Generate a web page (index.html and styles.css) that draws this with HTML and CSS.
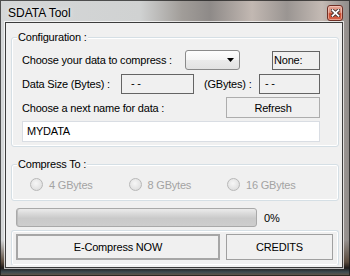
FILE: index.html
```html
<!DOCTYPE html>
<html lang="en">
<head>
    <meta charset="UTF-8">
    <title>SDATA Tool</title>
    <link rel="stylesheet" href="styles.css">
</head>
<body>
    <div class="window">
        <div class="titlebar">
            <span class="title">SDATA Tool</span>
            <span class="close">
                <svg width="9" height="8" viewBox="0 0 9 8">
                    <path d="M1.5 1.2 L7.5 6.8 M7.5 1.2 L1.5 6.8" stroke="#3a2a28" stroke-width="3.4" stroke-linecap="square"/>
                    <path d="M1.5 1.2 L7.5 6.8 M7.5 1.2 L1.5 6.8" stroke="#fff" stroke-width="1.8" stroke-linecap="square"/>
                </svg>
            </span>
        </div>
        <div class="client">
            <div class="group config">
                <span class="legend">Configuration :</span>
                <div class="row r1">
                    <span class="lbl w-choose">Choose your data to compress :</span>
                    <div class="combo">
                        <svg class="arrow" width="7" height="4" viewBox="0 0 7 4"><polygon points="0,0 7,0 3.5,4" fill="#000"/></svg>
                    </div>
                    <div class="box none">None:</div>
                </div>
                <div class="row r2">
                    <span class="lbl w-size">Data Size (Bytes) :</span>
                    <div class="box bytes">- -</div>
                    <span class="lbl w-gb">(GBytes) :</span>
                    <div class="box gbytes">- -</div>
                </div>
                <div class="row r3">
                    <span class="lbl">Choose a next name for data :</span>
                    <div class="btn refresh">Refresh</div>
                </div>
                <div class="row r4">
                    <div class="textbox">MYDATA</div>
                </div>
            </div>

            <div class="group compress">
                <span class="legend">Compress To :</span>
                <div class="radios">
                    <label class="radio"><span class="dot"></span>4 GBytes</label>
                    <label class="radio"><span class="dot"></span>8 GBytes</label>
                    <label class="radio"><span class="dot"></span>16 GBytes</label>
                </div>
            </div>

            <div class="progress-row">
                <div class="progress"></div>
                <span class="pct">0%</span>
            </div>

            <div class="group actions">
                <div class="btn big focus">E-Compress NOW</div>
                <div class="btn big credits">CREDITS</div>
            </div>
        </div>
    </div>
</body>
</html>
```

FILE: styles.css
```css
* {
    box-sizing: border-box;
}
body {
    margin: 0;
    font-family: "Liberation Sans", Arial, sans-serif;
    background: #2e2a26;
}
.window {
    width: 350px;
    height: 276px;
    padding: 0 7px 8px 5px;
    display: flex;
    flex-direction: column;
    background:
        linear-gradient(180deg, rgba(0,0,0,0) 0, rgba(0,0,0,0) 240px, #5a4a3c 262px, #1e1a18 268px, #3d4c52 272px, #6a5a48 276px),
        linear-gradient(90deg, #d5d7d8 0, #d0d2d2 40%, #a19d99 52%, #8e8a88 60%, #c2b8b2 72%, #9a9592 82%, #c4bab4 92%, #8f8b89 100%);
    box-shadow: inset 0 0 0 1px rgba(20, 20, 20, 0.7);
}
.titlebar {
    height: 22px;
    display: flex;
    justify-content: space-between;
    align-items: flex-start;
}
.title {
    padding: 6px 0 0 3px;
    font-size: 12px;
    line-height: 14px;
    color: #000;
    text-shadow: 0 0 5px rgba(255, 255, 255, 0.9);
}
.close {
    margin-top: 5px;
    width: 16px;
    height: 16px;
    border: 1px solid #6e2e24;
    border-radius: 3px;
    background: linear-gradient(#e7a595 0, #d88a76 45%, #c6462c 55%, #d8674c 100%);
    box-shadow: inset 0 0 0 1px rgba(255, 220, 210, 0.5);
    display: flex;
    align-items: center;
    justify-content: center;
}
.client {
    height: 246px;
    border: 1px solid #3c3c3c;
    background: #f0f0f0;
    box-shadow: 0 0 0 1px rgba(255, 255, 255, 0.7);
    font-size: 11px;
    letter-spacing: -0.2px;
    color: #000;
}
.group {
    position: relative;
    margin: 0 3px 0 5px;
    border: 1px solid #d5dfe5;
    border-radius: 3px;
    box-shadow: inset 0 0 0 1px #fff;
}
.legend {
    position: absolute;
    top: -7px;
    left: 5px;
    padding: 0 1px;
    line-height: 13px;
    background: #f0f0f0;
}
.config {
    margin-top: 14px;
    padding: 12px 18px 4px 10px;
}
.row {
    display: flex;
    align-items: center;
    height: 20px;
}
.r2 {
    margin-top: 4px;
}
.r3, .r4 {
    margin-top: 3px;
    height: 21px;
}
.lbl {
    white-space: nowrap;
}
.w-choose {
    width: 163px;
}
.w-size {
    width: 99px;
}
.w-gb {
    width: 55px;
    margin-left: 10px;
}
.combo {
    width: 55px;
    height: 20px;
    border: 1px solid #8a8a8a;
    border-radius: 3px;
    background: linear-gradient(#fdfdfd 0, #f4f4f4 50%, #ebebeb 50%, #e2e2e2 100%);
    display: flex;
    align-items: center;
    justify-content: flex-end;
    padding-right: 5px;
}
.box {
    height: 20px;
    border: 1px solid #646464;
    background: #f0f0f0;
    line-height: 17px;
    white-space: nowrap;
}
.none {
    width: 48px;
    height: 19px;
    margin-left: 32px;
    margin-top: 1px;
    padding-left: 1px;
}
.bytes {
    width: 73px;
    padding-left: 9px;
}
.gbytes {
    width: 61px;
    padding-left: 5px;
}
.btn {
    display: flex;
    align-items: center;
    justify-content: center;
    background: #f0f0f0;
    border: 1px solid #adadad;
}
.refresh {
    margin-left: auto;
    width: 94px;
    height: 21px;
}
.textbox {
    width: 100%;
    height: 21px;
    border: 1px solid #d9dde3;
    background: #fff;
    padding-left: 4px;
    line-height: 19px;
}
.compress {
    margin-top: 17px;
    padding: 13px 0 9px 18px;
}
.radios {
    display: flex;
    height: 13px;
}
.radio {
    width: 98.5px;
    display: flex;
    align-items: center;
    color: #a3a3a3;
    white-space: nowrap;
}
.dot {
    width: 13px;
    height: 13px;
    margin-right: 6px;
    border: 1px solid #b8b8b8;
    border-radius: 50%;
    background: radial-gradient(circle at 45% 40%, #f6f6f6 0, #e4e4e4 60%, #d4d4d4 100%);
}
.progress-row {
    margin-top: 7px;
    margin-left: 10px;
    display: flex;
    align-items: center;
    height: 19px;
}
.progress {
    width: 241px;
    height: 19px;
    border: 1px solid #a9a9a9;
    border-radius: 3px;
    background: linear-gradient(#ebebeb 0, #d8d8d8 30%, #c9c9c9 55%, #cecece 100%);
    box-shadow: inset 1px 0 0 #bcbcbc;
}
.pct {
    margin-left: 7px;
}
.actions {
    margin-top: 3px;
    height: 36px;
    padding: 3px 5px 0 4px;
    display: flex;
    gap: 6px;
    border-bottom-color: transparent;
}
.big {
    height: 26px;
}
.focus {
    width: 204px;
    border: 2px solid #a6a6a6;
}
.credits {
    width: 107px;
    border: 1px solid #a0a0a0;
}
```
